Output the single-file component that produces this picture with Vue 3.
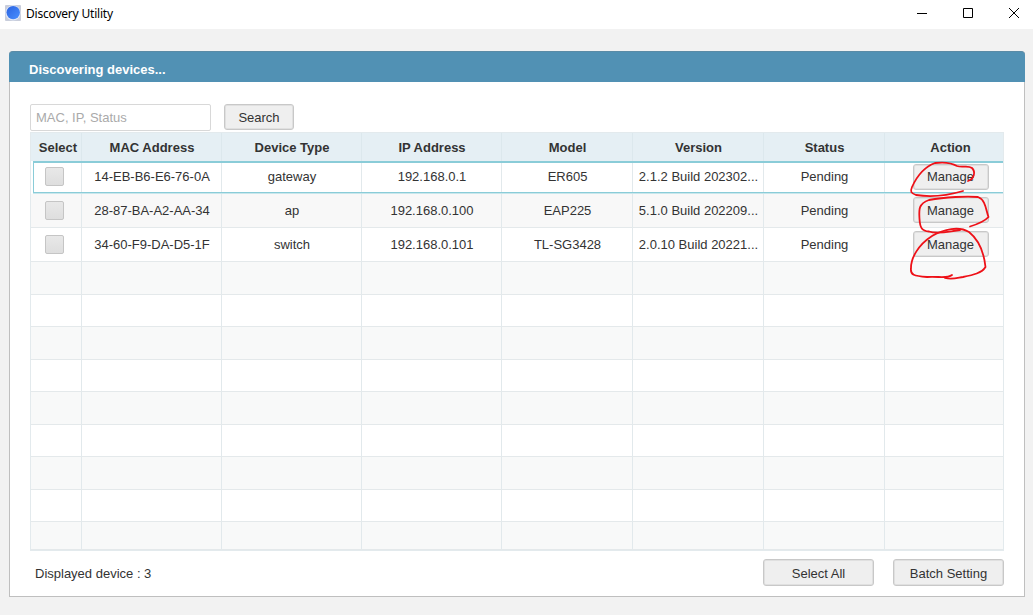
<script setup>
import { ref } from 'vue'

const keyword = ref('')
const columns = ['Select', 'MAC Address', 'Device Type', 'IP Address', 'Model', 'Version', 'Status', 'Action']
const devices = ref([
  { mac: '14-EB-B6-E6-76-0A', type: 'gateway', ip: '192.168.0.1', model: 'ER605', version: '2.1.2 Build 202302...', status: 'Pending' },
  { mac: '28-87-BA-A2-AA-34', type: 'ap', ip: '192.168.0.100', model: 'EAP225', version: '5.1.0 Build 202209...', status: 'Pending' },
  { mac: '34-60-F9-DA-D5-1F', type: 'switch', ip: '192.168.0.101', model: 'TL-SG3428', version: '2.0.10 Build 20221...', status: 'Pending' }
])
const selected = ref(0)
</script>

<template>
  <div class="window">
    <div class="titlebar">
      <svg class="app-icon" width="16" height="16" viewBox="0 0 16 16">
        <defs>
          <linearGradient id="ball" x1="0" y1="0" x2="1" y2="1">
            <stop offset="0" stop-color="#2a62e0" />
            <stop offset="1" stop-color="#4a90ff" />
          </linearGradient>
        </defs>
        <rect width="16" height="16" rx="1" fill="#c8cddb" />
        <circle cx="8" cy="7.8" r="7.6" fill="#dfe6f6" />
        <circle cx="8.2" cy="7.6" r="6.7" fill="url(#ball)" />
      </svg>
      <span class="app-name">Discovery Utility</span>
      <div class="controls">
        <svg width="12" height="12" viewBox="0 0 12 12"><path d="M1 6.5H11" /></svg>
        <svg width="12" height="12" viewBox="0 0 12 12"><path d="M1.5 1.5H10.5V10.5H1.5Z" /></svg>
        <svg width="12" height="12" viewBox="0 0 12 12"><path d="M1 1L11 11M11 1L1 11" /></svg>
      </div>
    </div>

    <div class="panel">
      <div class="panel-head">Discovering devices...</div>
      <div class="panel-body">
        <div class="search">
          <input v-model="keyword" type="text" placeholder="MAC, IP, Status" />
          <button class="btn">Search</button>
        </div>

        <div class="table">
          <div class="row head">
            <div v-for="col in columns" :key="col" class="cell">{{ col }}</div>
          </div>
          <div v-for="(d, i) in devices" :key="d.mac" :class="['row', 'device', { selected: i === selected }]" @click="selected = i">
            <div class="cell"><span class="checkbox"></span></div>
            <div class="cell">{{ d.mac }}</div>
            <div class="cell">{{ d.type }}</div>
            <div class="cell">{{ d.ip }}</div>
            <div class="cell">{{ d.model }}</div>
            <div class="cell">{{ d.version }}</div>
            <div class="cell">{{ d.status }}</div>
            <div class="cell"><button class="btn manage">Manage</button></div>
          </div>
          <div v-for="n in 9" :key="n" class="row empty">
            <div v-for="col in columns" :key="col" class="cell"></div>
          </div>

          <!-- red pen marks around the manage buttons -->
          <svg class="marks" width="90" height="130" viewBox="905 155 90 130">
            <path d="M968 181C974 179 976 172 972 168C968 165 962 168 957 166C952 163 943 162 935 163C924 167 917 176 912 187C910 192 911 193 916 195C928 197 946 196 963 191" />
            <path d="M970 226.500C978 224 984 222 988.500 217C986 211 986 200 978 197C967 196 945 197 929 200C918 204 919 210 919.500 219C920 228 922 231 929 231.500C938 235 950 231 960 230" />
            <path d="M952 275C947 279 938 276 927 277C914 276 910 275 911 268C911 258 918 245 932 236C944 229 959 226 969 232C979 240 984 253 985.500 267C982 273 973 275 963 277C957 278 952 280 945 278" />
          </svg>
        </div>

        <div class="footer">
          <span>Displayed device : {{ devices.length }}</span>
          <div class="actions">
            <button class="btn">Select All</button>
            <button class="btn">Batch Setting</button>
          </div>
        </div>
      </div>
    </div>
  </div>
</template>

<style>
body { margin: 0; background: #f2f2f2; overflow: hidden; }
</style>

<style scoped>
.window { box-sizing: border-box; width: 1033px; height: 615px; background: #f2f2f2; font-family: "Liberation Sans", Arial, sans-serif; font-size: 13px; color: #333; }
.window * { box-sizing: border-box; }

.titlebar { height: 29px; padding: 0 13px 3px 5px; background: #fff; display: flex; align-items: center; color: #000; }
.app-name { margin-left: 5px; font-family: "Noto Sans", "Open Sans", sans-serif; font-size: 12px; letter-spacing: -0.2px; }
.controls { margin-left: auto; display: flex; gap: 34px; }
.controls svg { display: block; fill: none; stroke: #000; stroke-width: 1; }

.panel { width: 1016px; height: 546px; margin: 22px 0 0 9px; background: #fff; border: 1px solid #bfbfbf; border-top: 0; border-radius: 4px 4px 0 0; }
.panel-head { height: 31px; margin: 0 -1px; padding: 3px 0 0 20px; line-height: 30px; background: #5191b4; border-top: 1px solid #5a8ba6; border-radius: 4px 4px 0 0; color: #fff; font-weight: bold; }
.panel-body { padding: 22px 20px 0; }

.search { display: flex; gap: 13px; height: 28px; }
.search input { width: 181px; height: 27px; padding: 0 5px; border: 1px solid #d8d8d8; border-radius: 2px; background: #fff; font: inherit; outline: none; }
.search input::placeholder { color: #aaa; opacity: 1; }

.btn { height: 26px; padding: 0; border: 1px solid #c8c8c8; border-radius: 3px; background: #efefef; box-shadow: inset 0 0 0 1px #e0e0e0; color: #333; font: inherit; }
.search .btn { width: 70px; }

.table { position: relative; width: 974px; height: 419px; border: 1px solid #e3eaed; }
.row { display: grid; grid-template-columns: 51px 140px 140px 140px 131px 131px 121px 118px; }
.cell { display: flex; align-items: center; justify-content: center; padding-left: 1px; border-right: 1px solid #e2e9ec; border-bottom: 1px solid #e4e9eb; white-space: nowrap; }
.cell:last-child { padding-left: 13px; border-right: 0; }
.head { height: 28px; background: #e5eff4; font-weight: bold; }
.head .cell { border-bottom: 0; border-right-color: #dce8ed; }
.head .cell:first-child { padding-left: 4px; }
.device { height: 34px; }
.device:nth-child(odd) { background: #f8f8f8; }
.device.selected { position: relative; height: 33px; background: #fff; }
.device.selected .cell { padding-bottom: 2px; border-bottom: 0; }
.device.selected::after { content: ""; position: absolute; inset: 0 0 1px 2px; border: 1px solid #8accd8; border-top-width: 2px; border-right: 0; box-shadow: 0 1px #c9e7ec; pointer-events: none; }
.empty { height: 32.5px; }
.empty:nth-child(odd) { background: #f8f9f9; }
.empty:last-of-type { height: 28px; }
.checkbox { width: 19px; height: 19px; margin-right: 5px; border: 1px solid #c5c5c5; border-radius: 2px; background: linear-gradient(#e8e8e8, #dedede); }
.manage { width: 76px; margin-bottom: 1px; }
.selected .manage { margin-bottom: 0; }

.marks { position: absolute; left: 874px; top: 22px; fill: none; stroke: #ee1118; stroke-width: 1.8; stroke-linecap: round; stroke-linejoin: round; pointer-events: none; }

.footer { display: flex; justify-content: space-between; align-items: center; width: 974px; padding: 8px 0 0 5px; }
.footer span { padding-top: 2px; }
.actions { display: flex; gap: 19px; }
.actions .btn { width: 111px; height: 27px; padding-top: 1px; }
</style>
